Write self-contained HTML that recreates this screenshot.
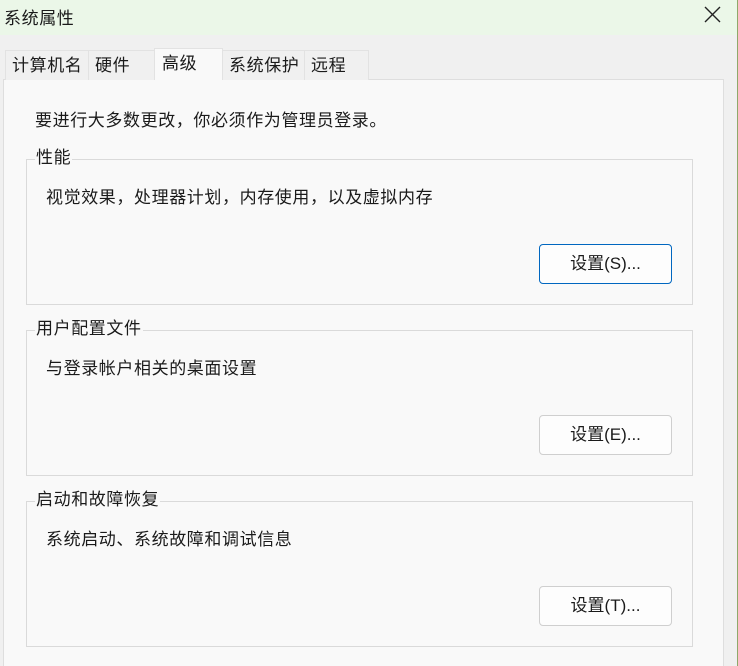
<!DOCTYPE html>
<html><head><meta charset="utf-8"><style>
*{margin:0;padding:0;box-sizing:border-box}
html,body{width:738px;height:666px;overflow:hidden}
body{background:#f0f0f0;position:relative;font-family:"Liberation Sans","Noto Sans CJK SC",sans-serif;font-size:17px;letter-spacing:0.6px;color:#1a1a1a}
.title{position:absolute;left:0;top:0;width:737px;height:35px;background:#ebf7e8}
.title span{position:absolute;left:4px;top:4px}
.edge{position:absolute;left:737px;top:0;width:1px;height:666px;background:#8fa86a}
.x{position:absolute;left:703px;top:5px}
.tab{position:absolute;top:50px;height:30px;border:1px solid #e2e2e2;border-bottom:none;background:#f0f0f0;padding-left:6px;line-height:30px;white-space:nowrap}
.tab.sel{top:48px;height:32px;background:#f9f9f9;z-index:2;padding-left:7px}
.panel{position:absolute;left:3px;top:79px;width:721px;height:587px;background:#f9f9f9;border:1px solid #dedede;border-bottom:none}
.grp{position:absolute;left:26px;width:667px;height:146px;border:1px solid #dadada}
.lbl{position:absolute;left:8px;top:-13px;background:#f9f9f9;padding:0 1px;line-height:22px}
.desc{position:absolute;left:19px;top:23px;white-space:nowrap}
.btn{position:absolute;left:512px;top:84px;width:133px;height:40px;border:1px solid #cfcfcf;border-radius:4px;background:#fdfdfd;text-align:center;line-height:38px;letter-spacing:0}
.btn.b{border-color:#0067c0}
</style></head><body>
<div class="title"><span>系统属性</span></div>
<svg class="x" width="20" height="20" viewBox="0 0 20 20"><path d="M2 2L17 17M17 2L2 17" stroke="#222" stroke-width="1.4"/></svg>
<div class="edge"></div>
<div class="panel"></div>
<div class="tab" style="left:5px;width:84px">计算机名</div>
<div class="tab" style="left:88px;width:67px">硬件</div>
<div class="tab sel" style="left:154px;width:69px">高级</div>
<div class="tab" style="left:222px;width:83px">系统保护</div>
<div class="tab" style="left:304px;width:65px">远程</div>
<div style="position:absolute;left:35px;top:106px;white-space:nowrap">要进行大多数更改，你必须作为管理员登录。</div>
<div class="grp" style="top:159px"><div class="lbl">性能</div><div class="desc">视觉效果，处理器计划，内存使用，以及虚拟内存</div><div class="btn b">设置(S)...</div></div>
<div class="grp" style="top:330px"><div class="lbl">用户配置文件</div><div class="desc">与登录帐户相关的桌面设置</div><div class="btn">设置(E)...</div></div>
<div class="grp" style="top:501px"><div class="lbl">启动和故障恢复</div><div class="desc">系统启动、系统故障和调试信息</div><div class="btn">设置(T)...</div></div>
</body></html>
